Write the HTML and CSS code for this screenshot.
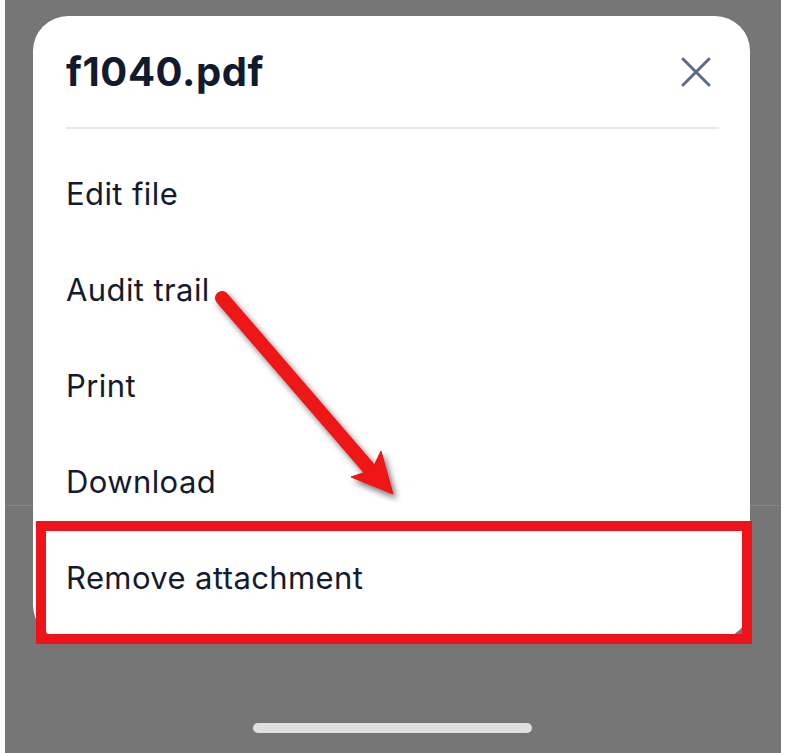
FILE: index.html
```html
<!DOCTYPE html>
<html lang="en">
<head>
  <meta charset="UTF-8">
  <meta name="viewport" content="width=device-width, initial-scale=1.0">
  <title>f1040.pdf</title>
  <link rel="stylesheet" href="styles.css">
</head>
<body>
  <div class="page">
    <div class="screen">
      <div class="sheet">
        <div class="sheet-header">
          <h1>f1040.pdf</h1>
          <button class="close" aria-label="Close">
            <svg width="32" height="32" viewBox="0 0 32 32">
              <path d="M3 3 L29 29 M29 3 L3 29" stroke="#5d6b86" stroke-width="3" stroke-linecap="round" fill="none"/>
            </svg>
          </button>
        </div>
        <div class="divider"></div>
        <ul class="menu">
          <li>Edit file</li>
          <li>Audit trail</li>
          <li>Print</li>
          <li>Download</li>
          <li>Remove attachment</li>
        </ul>
      </div>
      <div class="backdrop-line"></div>
      <div class="home-bar"></div>
    </div>

    <!-- annotation overlay -->
    <div class="highlight"></div>
    <svg class="arrow" width="785" height="753" viewBox="0 0 785 753">
      <defs>
        <filter id="shadow" x="-20%" y="-20%" width="140%" height="140%">
          <feDropShadow dx="3" dy="4" stdDeviation="3" flood-color="#000" flood-opacity="0.55"/>
        </filter>
      </defs>
      <g filter="url(#shadow)" fill="#ee1219" stroke="#ee1219">
        <path d="M222 298 L372 472" stroke-width="14" stroke-linecap="round" fill="none"/>
        <polygon points="393,494 381,451 372,470 351,477" stroke-width="1"/>
      </g>
    </svg>
  </div>
</body>
</html>
```

FILE: styles.css
```css
body {
  margin: 0;
  background-color: #fff;
  font-family: Inter, "Noto Sans", sans-serif;
  color: #111827;
}

.page {
  position: relative;
  width: 785px;
  height: 753px;
  overflow: hidden;
}

.screen {
  position: relative;
  margin-left: 5px;
  width: 776px;
  height: 753px;
  padding-top: 16px;
  box-sizing: border-box;
  background-color: #767676;
}

.sheet {
  position: relative;
  z-index: 1;
  margin-left: 28px;
  width: 717px;
  height: 624px;
  background: #fff;
  border-radius: 35px;
  box-sizing: border-box;
  padding: 0 31px 0 33px;
}

.sheet-header {
  display: flex;
  align-items: center;
  justify-content: space-between;
  height: 111px;
}

.sheet-header h1 {
  margin: 0;
  font-size: 40px;
  font-weight: 700;
  color: #121a2d;
  letter-spacing: 0.6px;
}

.close {
  display: flex;
  padding: 0;
  margin-right: 7px;
  border: none;
  background: none;
}

.divider {
  height: 2px;
  background-color: #e6e7f0;
}

.menu {
  list-style: none;
  margin: 0;
  padding: 16px 0 0;
}

.menu li {
  display: flex;
  align-items: center;
  height: 96px;
  font-size: 31px;
  letter-spacing: 0.4px;
  color: #141b2e;
}

.backdrop-line {
  position: absolute;
  left: 0;
  right: 0;
  top: 505px;
  height: 1px;
  background-color: #868686;
}

.home-bar {
  position: absolute;
  left: 248px;
  top: 723px;
  width: 279px;
  height: 10px;
  border-radius: 5px;
  background-color: #e0e0e0;
}

.highlight {
  position: absolute;
  left: 36px;
  top: 521px;
  width: 696px;
  height: 103px;
  border: 10px solid #f0121a;
  z-index: 2;
}

.arrow {
  position: absolute;
  left: 0;
  top: 0;
  z-index: 3;
}
```
